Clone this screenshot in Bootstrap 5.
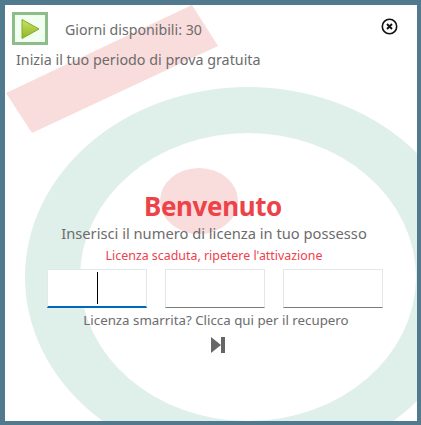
<!DOCTYPE html>
<html lang="it">
<head>
  <meta charset="UTF-8" />
  <meta name="viewport" content="width=device-width, initial-scale=1" />
  <title>Benvenuto</title>
  <link rel="stylesheet" href="https://cdn.jsdelivr.net/npm/bootstrap@5.3.0/dist/css/bootstrap.min.css" />
  <style>
    html, body { width: 421px; height: 425px; overflow: hidden; background: #fff; }
    body { font-family: "Noto Sans", "Open Sans", sans-serif; color: #6c6c6c; }
    .app-frame { position: relative; width: 421px; height: 425px; overflow: hidden; background: #fff;
      border-style: solid; border-color: #527a8f; border-width: 5px 4px 4px 5px; }
    .app-deco { position: absolute; left: -5px; top: -5px; width: 421px; height: 425px; }
    .app-body { position: relative; height: 100%; padding: 7px 0 0 7px; }
    .start-btn { width: 36px; height: 33px; padding: 0; border: 3px solid #8fbc8b; border-radius: 0; background: #f0fff0; }
    .days-text { font-size: 14.2px; margin-left: 17px; line-height: 20px; margin-top: 3px; }
    .trial-text { font-size: 14.3px; line-height: 20px; margin: 5px 0 0 4px; }
    .close-btn { position: absolute; top: 13px; right: 19px; padding: 0; border: 0; background: none; line-height: 0; }
    .welcome-box { width: 340px; margin: 119px 0 0 32px; }
    .welcome-title { font-size: 26px; font-weight: 700; line-height: 34px; letter-spacing: -0.4px; color: #ee4249; margin: 0; padding-right: 2px; }
    .welcome-sub { font-size: 14.7px; line-height: 20px; margin: 0; }
    .welcome-err { font-size: 12.4px; line-height: 16px; margin: 5px 0 0; color: #f0414b; }
    .code-row { width: 336px; gap: 18px; margin: 5px 0 0 1px; }
    .code-cell { position: relative; width: 100px; }
    .code-input { height: 39px; padding: 0; border: 1px solid #e6e6e6; border-bottom: 1px solid #7a7a7a; border-radius: 1px; background: #fff; box-shadow: none; }
    .code-input.is-current { border-color: #e3e8ee; border-bottom: 2px solid #0067c0; border-radius: 0; }
    .code-caret { position: absolute; left: 50px; top: 3px; width: 1px; height: 32px; background: #000; }
    .lost-text { font-size: 13.3px; line-height: 18px; margin: 3px 0 0; padding-left: 4px; }
    .next-btn { padding: 0 0 0 8px; border: 0; background: none; line-height: 0; margin-top: 8px; }
  </style>
</head>
<body>
  <div class="app-frame">
    <!-- background shapes -->
    <svg class="app-deco" viewBox="0 0 421 425" aria-hidden="true">
      <path fill="#dfefe9" fill-rule="evenodd" d="M25 277a223 190 0 1 0 446 0a223 190 0 1 0-446 0zM80 277a168 144 0 1 0 336 0a168 144 0 1 0-336 0z" />
      <polygon fill="#f9dcdc" points="6,93 192,5 218,46 32,133" />
      <ellipse fill="#f9dcdc" cx="199" cy="201" rx="39" ry="33" />
    </svg>

    <div class="app-body">
      <div class="d-flex align-items-center">
        <button type="button" class="btn start-btn d-flex align-items-center justify-content-center" aria-label="Avvia">
          <svg width="20" height="22" viewBox="0 0 20 22">
            <defs>
              <linearGradient id="playFill" x1="0" y1="0" x2="0" y2="1">
                <stop offset="0" stop-color="#cbe06a" />
                <stop offset="1" stop-color="#8fb71e" />
              </linearGradient>
            </defs>
            <path d="M2 1.5 19 11 2 20.5z" fill="url(#playFill)" stroke="#86a92f" stroke-width="1" stroke-linejoin="round" />
          </svg>
        </button>
        <span class="days-text">Giorni disponibili: 30</span>
      </div>
      <p class="trial-text">Inizia il tuo periodo di prova gratuita</p>

      <button type="button" class="close-btn" aria-label="Chiudi">
        <svg width="17" height="17" viewBox="0 0 17 17">
          <circle cx="8.5" cy="8.5" r="7.2" fill="none" stroke="#111" stroke-width="1.6" />
          <path d="M6 6l5 5M11 6l-5 5" stroke="#111" stroke-width="1.9" />
        </svg>
      </button>

      <div class="welcome-box text-center d-flex flex-column align-items-center">
        <h1 class="welcome-title">Benvenuto</h1>
        <p class="welcome-sub">Inserisci il numero di licenza in tuo possesso</p>
        <p class="welcome-err">Licenza scaduta, ripetere l'attivazione</p>
        <div class="code-row d-flex">
          <div class="code-cell">
            <input type="text" class="form-control code-input is-current" aria-label="Parte 1" />
            <span class="code-caret"></span>
          </div>
          <div class="code-cell"><input type="text" class="form-control code-input" aria-label="Parte 2" /></div>
          <div class="code-cell"><input type="text" class="form-control code-input" aria-label="Parte 3" /></div>
        </div>
        <p class="lost-text">Licenza smarrita? Clicca qui per il recupero</p>
        <button type="button" class="next-btn" aria-label="Avanti">
          <svg width="14" height="16" viewBox="0 0 14 16">
            <path d="M0 0 10 8 0 16z" fill="#666" />
            <rect x="10" y="0" width="4" height="16" fill="#666" />
          </svg>
        </button>
      </div>
    </div>
  </div>
  <script src="https://cdn.jsdelivr.net/npm/bootstrap@5.3.0/dist/js/bootstrap.bundle.min.js"></script>
</body>
</html>
